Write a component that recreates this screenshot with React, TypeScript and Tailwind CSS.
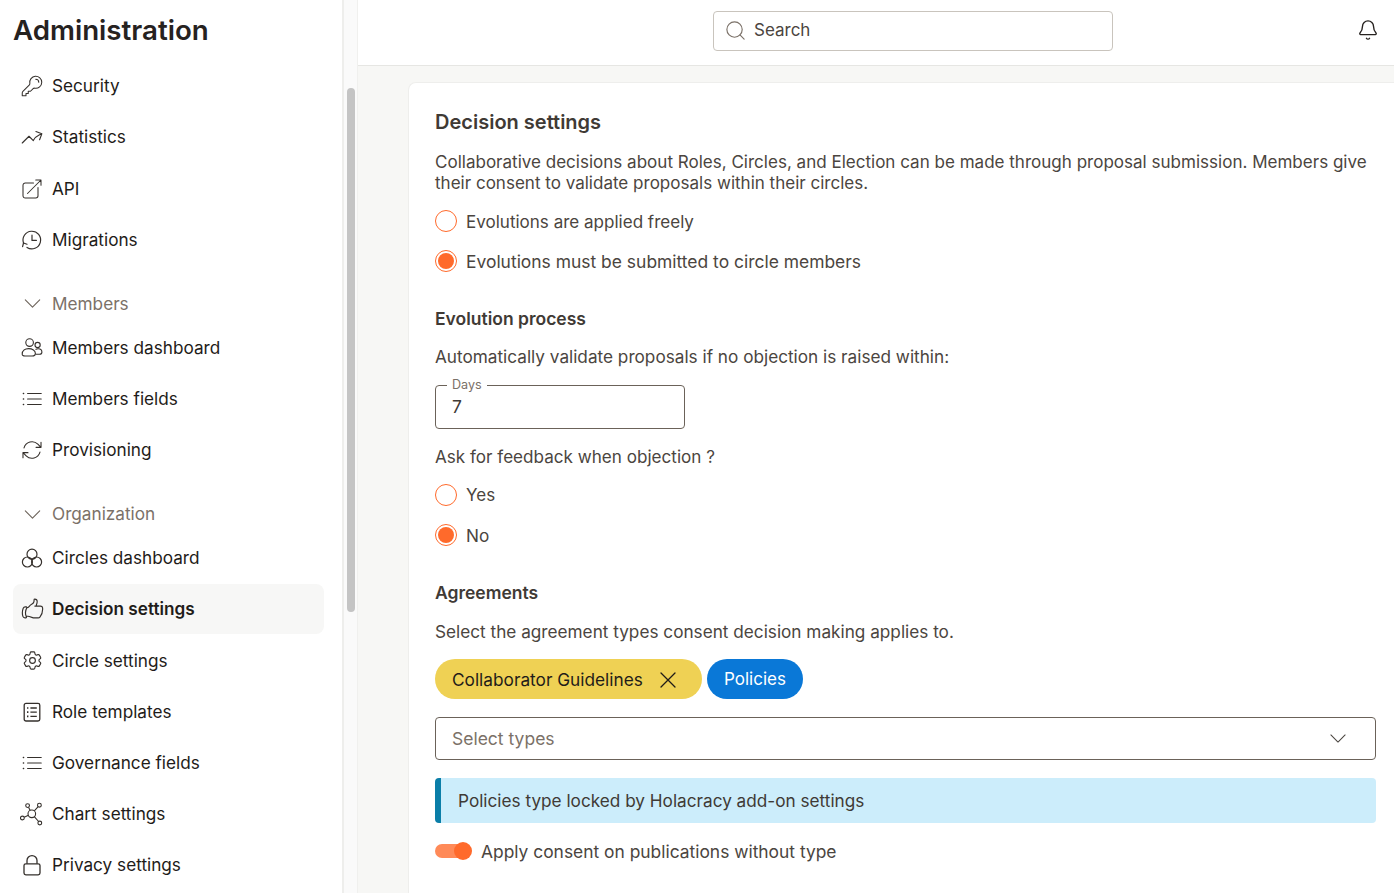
import { ReactNode } from 'react';
import { Search, Bell } from 'lucide-react';
import {
  HiOutlineKey,
  HiOutlineArrowTrendingUp,
  HiOutlineArrowTopRightOnSquare,
  HiOutlineHandThumbUp,
  HiOutlineArrowPath,
  HiOutlineCog6Tooth,
} from 'react-icons/hi2';

const iconClass = 'w-[22px] h-[22px] shrink-0 text-[#35302c]';

function HistoryIcon() {
  return (
    <svg viewBox="0 0 22 22" className={iconClass} fill="none" stroke="currentColor" strokeWidth="1.2" strokeLinecap="round" strokeLinejoin="round">
      <path d="M2.6 14.2A8.8 8.8 0 1 1 6 18.4" />
      <path d="M1.6 17.6l.9-3.6 3.5 1.2" />
      <path d="M11 6.2v5.2h4.4" />
    </svg>
  );
}

function ListIcon() {
  return (
    <svg viewBox="0 0 22 22" className={iconClass} fill="none" stroke="currentColor" strokeWidth="1.2" strokeLinecap="round">
      <path d="M6.6 5.5h13.6M6.6 11h13.6M6.6 16.5h13.6" />
      <path d="M2.4 5.5h.2M2.4 11h.2M2.4 16.5h.2" strokeWidth="1.5" />
    </svg>
  );
}

function Chevron({ className }: { className: string }) {
  return (
    <svg viewBox="0 0 18 10" className={className} fill="none" stroke="currentColor" strokeWidth="1.2" strokeLinecap="round" strokeLinejoin="round">
      <path d="M1 1l8 8 8-8" />
    </svg>
  );
}

function MembersIcon() {
  return (
    <svg viewBox="0 0 22 22" className={iconClass} fill="none" stroke="currentColor" strokeWidth="1.1">
      <circle cx="8.6" cy="5.6" r="3.8" />
      <circle cx="16.6" cy="8" r="2.6" />
      <path d="M1.2 17.2c0-3.6 3-5.6 6.4-5.6 3.8 0 6.8 2 6.8 4.8 0 1.6-1.2 2.6-3.2 2.6H4c-1.7 0-2.8-.7-2.8-1.8z" />
      <path d="M14.5 12.4c1-.5 1.9-.6 2.8-.6 2.4 0 3.6 1.6 3.6 3.4 0 1.2-.8 2-2.4 2h-3.6" />
    </svg>
  );
}

function CirclesIcon() {
  return (
    <svg viewBox="0 0 22 22" className={iconClass} fill="none" stroke="currentColor" strokeWidth="1.2">
      <circle cx="11" cy="7.2" r="5" />
      <circle cx="6.4" cy="15" r="5" />
      <circle cx="15.6" cy="15" r="5" />
    </svg>
  );
}

function TemplateIcon() {
  return (
    <svg viewBox="0 0 22 22" className={iconClass} fill="none" stroke="currentColor" strokeWidth="1.3">
      <rect x="3.2" y="2.4" width="15.6" height="17.6" rx="1.8" />
      <path d="M9.4 7h6.4M9.4 11.2h6.4M9.4 15.4h6.4" />
      <path d="M6 7h1.4M6 11.2h1.4M6 15.4h1.4" strokeWidth="1.7" />
    </svg>
  );
}

function ChartIcon() {
  return (
    <svg viewBox="0 0 24 24" className="w-[24px] h-[24px] shrink-0 text-[#35302c]" fill="none" stroke="currentColor" strokeWidth="1.1">
      <circle cx="11.8" cy="11.8" r="3.8" />
      <circle cx="7.6" cy="3.6" r="1.9" />
      <circle cx="19.4" cy="3.2" r="1.9" />
      <circle cx="2.4" cy="16" r="1.9" />
      <circle cx="19.8" cy="21" r="1.9" />
      <path d="M8.5 5.3l1.6 3M18.2 4.7l-3.9 4.2M4.2 15.2l4.2-1.9M18.6 19.5l-4.3-4.8" />
    </svg>
  );
}

function LockIcon() {
  return (
    <svg viewBox="0 0 22 22" className={iconClass} fill="none" stroke="currentColor" strokeWidth="1.3">
      <rect x="3" y="9.8" width="16" height="11" rx="1.8" />
      <path d="M6 9.8V6.6a5 5 0 0 1 10 0v3.2" />
    </svg>
  );
}

function NavItem({ icon, label, active }: { icon: ReactNode; label: string; active?: boolean }) {
  return (
    <div className={`flex items-center h-[50px] mt-[1.2px] ml-[13px] w-[311px] rounded-lg pl-[8px] ${active ? 'bg-[#f7f7f6]' : ''}`}>
      <div className="w-[22px] flex justify-center shrink-0">{icon}</div>
      <span className={`ml-[9px] text-[17.2px] text-[#1f1c19] ${active ? 'font-semibold' : ''}`}>{label}</span>
    </div>
  );
}

function SectionHead({ label, className }: { label: string; className: string }) {
  return (
    <div className={`flex items-center h-[24px] ml-[13px] pl-[8px] ${className}`}>
      <div className="w-[22px] flex justify-center">
        <Chevron className="w-[17px] h-[9px] text-[#6b6259]" />
      </div>
      <span className="ml-[9px] text-[17.2px] text-[#7b7168]">{label}</span>
    </div>
  );
}

function Radio({ label, checked, className, labelClass = 'text-[17.2px]' }: { label: string; checked?: boolean; className: string; labelClass?: string }) {
  return (
    <div className={`flex items-center h-[24px] ${className}`}>
      <div className="w-[22px] h-[22px] rounded-full border border-[#ff6a2b] flex items-center justify-center shrink-0 bg-white">
        {checked && <div className="w-[16px] h-[16px] rounded-full bg-[#ff6a2b]" />}
      </div>
      <span className={`ml-[9px] pt-[2px] text-[#4b4540] ${labelClass}`}>{label}</span>
    </div>
  );
}

export default function App() {
  return (
    <div className="flex h-[893px] overflow-hidden bg-white font-['Inter','Liberation_Sans',sans-serif]">
      <aside className="w-[344px] shrink-0 border-r-2 border-[#eeeeec] overflow-hidden">
        <h1 className="h-[60px] pl-[13px] pt-[1px] flex items-center text-[27.7px] font-semibold text-[#26221f]">Administration</h1>
        <NavItem icon={<HiOutlineKey className="w-[24px] h-[24px] shrink-0 text-[#35302c]" strokeWidth={1.05} />} label="Security" />
        <NavItem icon={<HiOutlineArrowTrendingUp className="w-[24px] h-[24px] shrink-0 text-[#35302c]" strokeWidth={1.1} />} label="Statistics" />
        <NavItem icon={<HiOutlineArrowTopRightOnSquare className="w-[24px] h-[24px] shrink-0 text-[#35302c]" strokeWidth={1.05} />} label="API" />
        <NavItem icon={<HistoryIcon />} label="Migrations" />
        <SectionHead label="Members" className="mt-[27px]" />
        <div className="mt-[7px]">
          <NavItem icon={<MembersIcon />} label="Members dashboard" />
          <NavItem icon={<ListIcon />} label="Members fields" />
          <NavItem icon={<HiOutlineArrowPath className="w-[24px] h-[24px] shrink-0 text-[#35302c]" strokeWidth={1.1} />} label="Provisioning" />
        </div>
        <SectionHead label="Organization" className="mt-[27px]" />
        <div className="mt-[7px]">
          <NavItem icon={<CirclesIcon />} label="Circles dashboard" />
          <NavItem active icon={<HiOutlineHandThumbUp className="w-[25px] h-[25px] shrink-0 text-[#35302c]" strokeWidth={1.1} />} label="Decision settings" />
          <NavItem icon={<HiOutlineCog6Tooth className="w-[23px] h-[23px] shrink-0 text-[#35302c]" strokeWidth={1.2} />} label="Circle settings" />
          <NavItem icon={<TemplateIcon />} label="Role templates" />
          <NavItem icon={<ListIcon />} label="Governance fields" />
          <NavItem icon={<ChartIcon />} label="Chart settings" />
          <NavItem icon={<LockIcon />} label="Privacy settings" />
        </div>
      </aside>

      <div className="w-[14px] shrink-0 bg-[#fafafa] border-r border-[#f0f0ee] pt-[88px] pl-[3px]">
        <div className="w-[8px] h-[524px] rounded-full bg-[#c4c4c4]" />
      </div>

      <main className="flex-1 min-w-0 flex flex-col bg-[#f7f7f5]">
        <header className="h-[66px] shrink-0 bg-white border-b border-[#e6e6e3] flex items-start pt-[11px] pl-[355px] pr-[15px]">
          <div className="w-[400px] h-[40px] border border-[#c9c4bd] rounded flex items-center pl-[10px]">
            <Search strokeWidth={1.2} className="w-[23px] h-[23px] -mt-[2px] text-[#7b7168]" />
            <span className="ml-[7px] text-[17px] text-[#4b4540]">Search</span>
          </div>
          <Bell strokeWidth={1.5} className="ml-auto mt-[8px] w-[22px] h-[22px] text-[#26221f]" />
        </header>

        <section className="flex-1 mt-[16px] ml-[50px] bg-white border-l border-t border-[#eeeeec] rounded-tl-lg pl-[26px] pr-[18px] pt-[25px]">
          <h2 className="h-[25px] pt-[2px] flex items-center text-[20px] font-semibold text-[#3f3a35]">Decision settings</h2>
          <p className="mt-[18px] text-[17.05px] leading-[21px] text-[#4b4540]">
            Collaborative decisions about Roles, Circles, and Election can be made through proposal submission. Members give their consent to validate proposals within their circles.
          </p>
          <Radio label="Evolutions are applied freely" className="mt-[16px]" labelClass="text-[17.05px]" />
          <Radio label="Evolutions must be submitted to circle members" checked className="mt-[16px]" labelClass="text-[17.45px]" />

          <h3 className="mt-[33px] h-[24px] pt-[2px] flex items-center text-[17.5px] font-semibold text-[#3f3a35]">Evolution process</h3>
          <p className="mt-[14px] h-[24px] pt-[2px] flex items-center text-[17.2px] text-[#4b4540]">Automatically validate proposals if no objection is raised within:</p>

          <div className="relative mt-[17px] w-[250px] h-[44px] border border-[#6b6259] rounded flex items-center pl-[16px]">
            <span className="absolute left-[11px] -top-[9px] px-[5px] bg-white text-[12.6px] leading-[16px] text-[#7b7168]">Days</span>
            <span className="mt-[1px] text-[17.5px] text-[#3f3a35]">7</span>
          </div>

          <p className="mt-[15px] h-[24px] pt-[2px] flex items-center text-[17.1px] text-[#4b4540]">Ask for feedback when objection ?</p>
          <Radio label="Yes" className="mt-[15px]" labelClass="text-[17px]" />
          <Radio label="No" checked className="mt-[16px]" />

          <h3 className="mt-[33px] h-[24px] pt-[2px] flex items-center text-[17.5px] font-semibold text-[#3f3a35]">Agreements</h3>
          <p className="mt-[15px] h-[24px] pt-[2px] flex items-center text-[17.2px] text-[#4b4540]">Select the agreement types consent decision making applies to.</p>

          <div className="mt-[16px] flex gap-[5px]">
            <div className="h-[40px] w-[267px] rounded-full bg-[#efd154] flex items-center pl-[17px] pt-[1px] text-[17.25px] text-[#1f1c19]">
              Collaborator Guidelines
              <svg viewBox="0 0 18 18" className="ml-auto mr-[25px] w-[18px] h-[18px]" fill="none" stroke="currentColor" strokeWidth="1.3" strokeLinecap="round">
                <path d="M2 2l14 14M16 2L2 16" />
              </svg>
            </div>
            <div className="h-[40px] w-[96px] rounded-full bg-[#0a78d7] flex items-center justify-center pt-[2px] text-[17px] text-white">Policies</div>
          </div>

          <div className="mt-[18px] h-[43px] border border-[#6b6259] rounded flex items-center pl-[16px] pr-[29px]">
            <span className="pt-[2px] text-[17.5px] text-[#7b7168]">Select types</span>
            <Chevron className="ml-auto w-[16px] h-[9px] text-[#4b4540]" />
          </div>

          <div className="mt-[18px] h-[45px] rounded bg-[#ccedfb] border-l-[6px] border-[#0a7ea8] flex items-center pl-[17px] text-[17.2px] text-[#3f3a35]">
            Policies type locked by Holacracy add-on settings
          </div>

          <div className="mt-[15px] h-[26px] flex items-center">
            <div className="relative w-[37px] h-[14px]">
              <div className="w-[34px] h-[14px] rounded-full bg-[#ff8a58]" />
              <div className="absolute right-0 -top-[2px] w-[18px] h-[18px] rounded-full bg-[#ff6a2b]" />
            </div>
            <span className="ml-[9px] pt-[2px] text-[17.4px] text-[#4b4540]">Apply consent on publications without type</span>
          </div>
        </section>
      </main>
    </div>
  );
}
